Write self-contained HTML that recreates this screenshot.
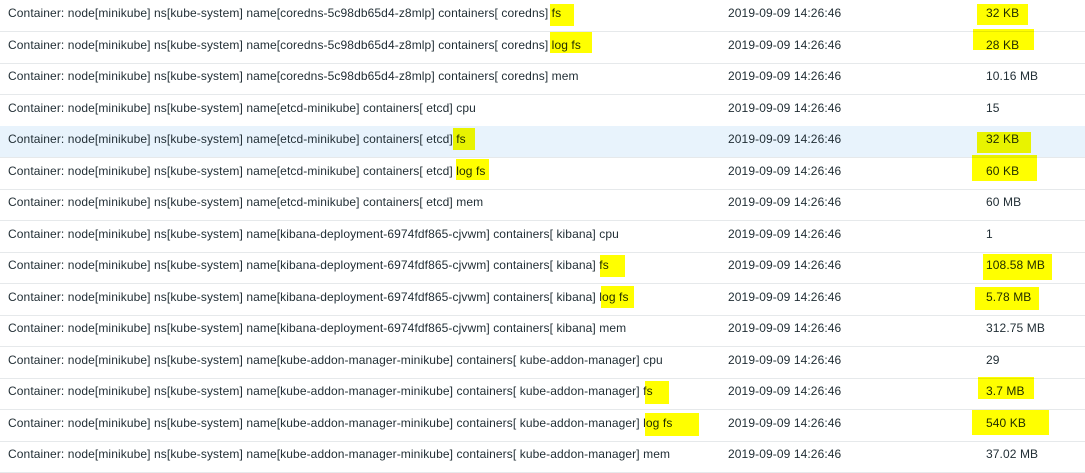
<!DOCTYPE html>
<html><head><style>
body{margin:0;width:1085px;height:472px;overflow:hidden;background:#fff;font-family:"Liberation Sans",Arial,sans-serif;font-size:12px;letter-spacing:0.1px;color:#1f2c33;position:relative}
.r{position:absolute;left:0;width:1085px;height:31px;border-bottom:1px solid #e6e9eb}
.r span{position:absolute;top:6px;line-height:14px;white-space:nowrap}
.a{left:8px}.b{left:728px}.c{left:986px}
.h{position:absolute;background:#ffff00;mix-blend-mode:multiply}
</style></head><body>
<div class="r" style="top:0"><span class="a">Container: node[minikube] ns[kube-system] name[coredns-5c98db65d4-z8mlp] containers[ coredns] fs</span><span class="b">2019-09-09 14:26:46</span><span class="c">32 KB</span></div>
<div class="r" style="top:31.5px"><span class="a">Container: node[minikube] ns[kube-system] name[coredns-5c98db65d4-z8mlp] containers[ coredns] log fs</span><span class="b">2019-09-09 14:26:46</span><span class="c">28 KB</span></div>
<div class="r" style="top:63px"><span class="a">Container: node[minikube] ns[kube-system] name[coredns-5c98db65d4-z8mlp] containers[ coredns] mem</span><span class="b">2019-09-09 14:26:46</span><span class="c">10.16 MB</span></div>
<div class="r" style="top:94.5px"><span class="a">Container: node[minikube] ns[kube-system] name[etcd-minikube] containers[ etcd] cpu</span><span class="b">2019-09-09 14:26:46</span><span class="c">15</span></div>
<div class="r" style="top:126px;background:#e8f3fc"><span class="a">Container: node[minikube] ns[kube-system] name[etcd-minikube] containers[ etcd] fs</span><span class="b">2019-09-09 14:26:46</span><span class="c">32 KB</span></div>
<div class="r" style="top:157.5px"><span class="a">Container: node[minikube] ns[kube-system] name[etcd-minikube] containers[ etcd] log fs</span><span class="b">2019-09-09 14:26:46</span><span class="c">60 KB</span></div>
<div class="r" style="top:189px"><span class="a">Container: node[minikube] ns[kube-system] name[etcd-minikube] containers[ etcd] mem</span><span class="b">2019-09-09 14:26:46</span><span class="c">60 MB</span></div>
<div class="r" style="top:220.5px"><span class="a">Container: node[minikube] ns[kube-system] name[kibana-deployment-6974fdf865-cjvwm] containers[ kibana] cpu</span><span class="b">2019-09-09 14:26:46</span><span class="c">1</span></div>
<div class="r" style="top:252px"><span class="a">Container: node[minikube] ns[kube-system] name[kibana-deployment-6974fdf865-cjvwm] containers[ kibana] fs</span><span class="b">2019-09-09 14:26:46</span><span class="c">108.58 MB</span></div>
<div class="r" style="top:283.5px"><span class="a">Container: node[minikube] ns[kube-system] name[kibana-deployment-6974fdf865-cjvwm] containers[ kibana] log fs</span><span class="b">2019-09-09 14:26:46</span><span class="c">5.78 MB</span></div>
<div class="r" style="top:315px"><span class="a">Container: node[minikube] ns[kube-system] name[kibana-deployment-6974fdf865-cjvwm] containers[ kibana] mem</span><span class="b">2019-09-09 14:26:46</span><span class="c">312.75 MB</span></div>
<div class="r" style="top:346.5px"><span class="a">Container: node[minikube] ns[kube-system] name[kube-addon-manager-minikube] containers[ kube-addon-manager] cpu</span><span class="b">2019-09-09 14:26:46</span><span class="c">29</span></div>
<div class="r" style="top:378px"><span class="a">Container: node[minikube] ns[kube-system] name[kube-addon-manager-minikube] containers[ kube-addon-manager] fs</span><span class="b">2019-09-09 14:26:46</span><span class="c">3.7 MB</span></div>
<div class="r" style="top:409.5px"><span class="a">Container: node[minikube] ns[kube-system] name[kube-addon-manager-minikube] containers[ kube-addon-manager] log fs</span><span class="b">2019-09-09 14:26:46</span><span class="c">540 KB</span></div>
<div class="r" style="top:441px"><span class="a">Container: node[minikube] ns[kube-system] name[kube-addon-manager-minikube] containers[ kube-addon-manager] mem</span><span class="b">2019-09-09 14:26:46</span><span class="c">37.02 MB</span></div>

<div class="h" style="left:550px;top:4px;width:24px;height:22px"></div>
<div class="h" style="left:977px;top:4px;width:51px;height:21px"></div>
<div class="h" style="left:550px;top:32px;width:42px;height:21px"></div>
<div class="h" style="left:973px;top:29px;width:61px;height:21px"></div>
<div class="h" style="left:453px;top:128px;width:22px;height:22px"></div>
<div class="h" style="left:977px;top:132px;width:54px;height:21px"></div>
<div class="h" style="left:456px;top:159px;width:33px;height:21px"></div>
<div class="h" style="left:972px;top:155px;width:65px;height:26px"></div>
<div class="h" style="left:600px;top:255px;width:25px;height:22px"></div>
<div class="h" style="left:983px;top:254px;width:69px;height:26px"></div>
<div class="h" style="left:601px;top:286px;width:33px;height:22px"></div>
<div class="h" style="left:975px;top:287px;width:64px;height:23px"></div>
<div class="h" style="left:645px;top:381px;width:24px;height:23px"></div>
<div class="h" style="left:978px;top:377px;width:56px;height:22px"></div>
<div class="h" style="left:645px;top:413px;width:54px;height:23px"></div>
<div class="h" style="left:972px;top:410px;width:77px;height:25px"></div>
</body></html>
